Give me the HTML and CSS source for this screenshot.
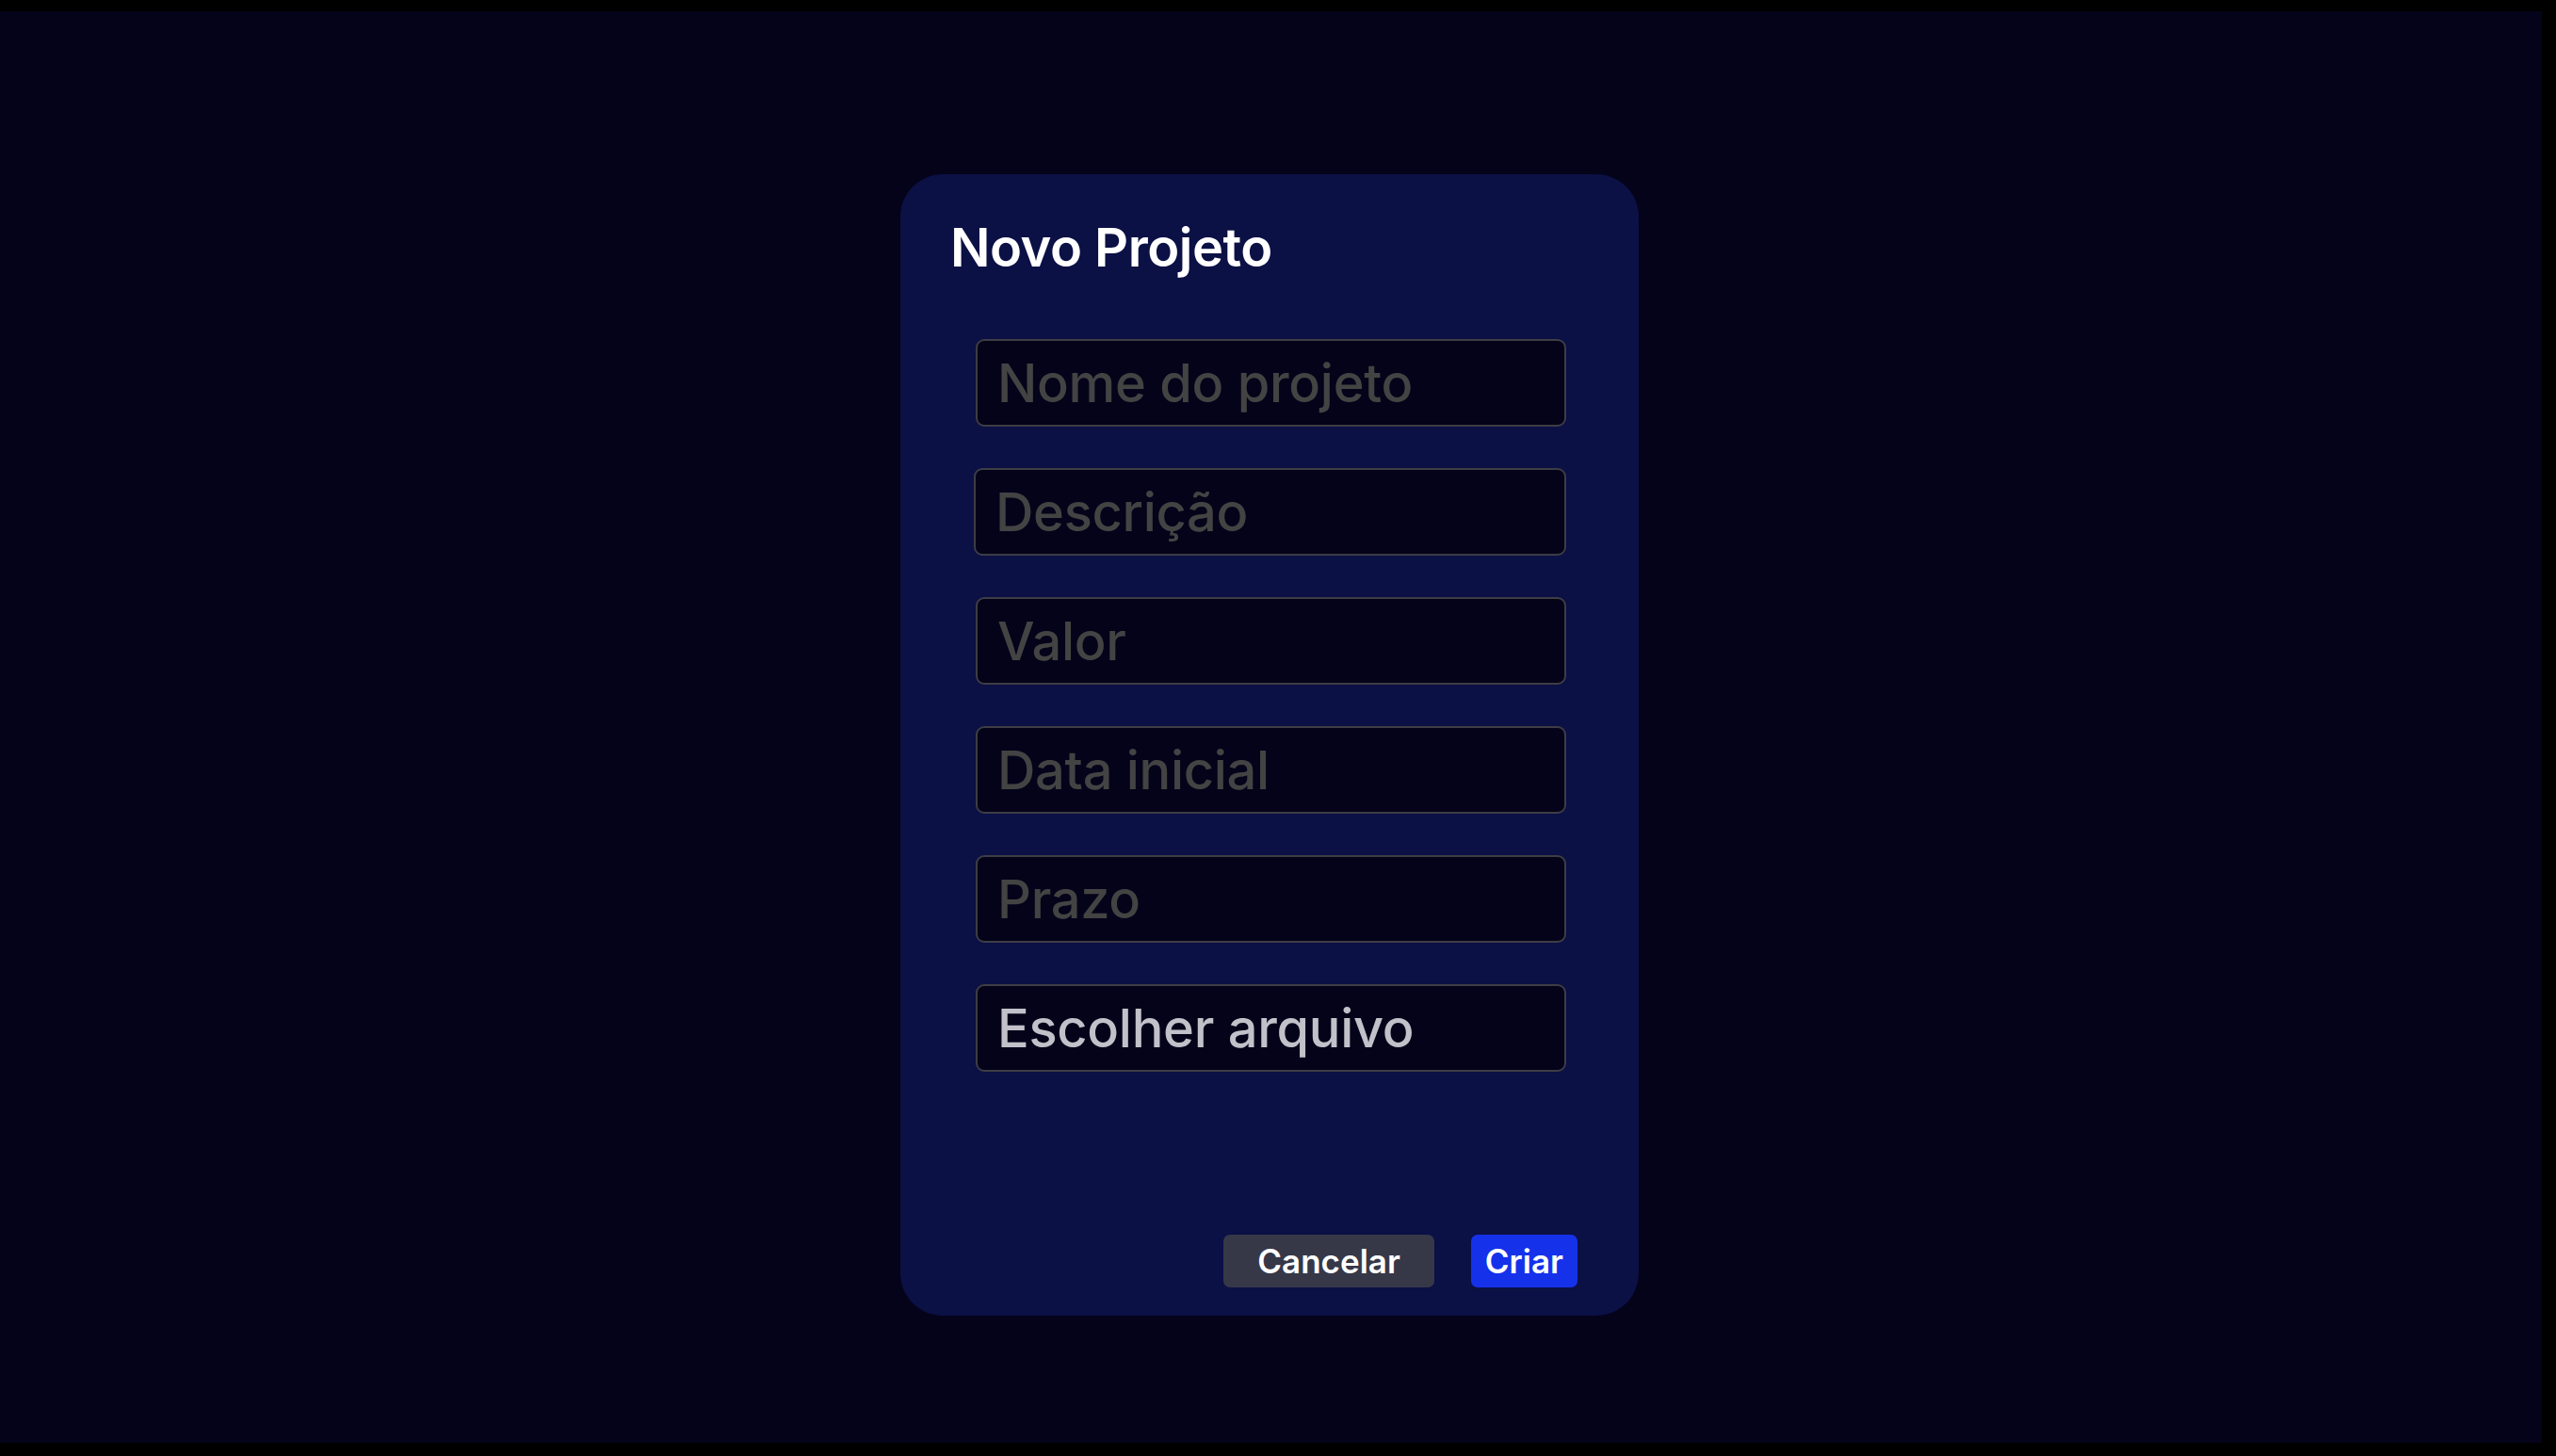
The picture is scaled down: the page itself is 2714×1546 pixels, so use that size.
FILE: index.html
```html
<!DOCTYPE html>
<html lang="pt-BR">
<head>
<meta charset="utf-8">
<title>Novo Projeto</title>
<link rel="stylesheet" href="styles.css">
</head>
<body>
<div class="screen">
  <div class="modal">
    <h1 class="title">Novo Projeto</h1>
    <form class="fields">
      <input class="field" type="text" placeholder="Nome do projeto">
      <input class="field field-wide" type="text" placeholder="Descrição">
      <input class="field" type="text" placeholder="Valor">
      <input class="field" type="text" placeholder="Data inicial">
      <input class="field" type="text" placeholder="Prazo">
      <label class="field file">Escolher arquivo</label>
    </form>
    <div class="actions">
      <button class="btn btn-cancel" type="button">Cancelar</button>
      <button class="btn btn-create" type="button">Criar</button>
    </div>
  </div>
</div>
</body>
</html>
```
FILE: styles.css
```css
html {
  background: #000;
}
body {
  margin: 0;
  font-family: Inter, "Liberation Sans", sans-serif;
}
.screen {
  margin-top: 12px;
  width: 2699px;
  height: 1520px;
  background: #05031a;
  display: flex;
  justify-content: flex-start;
  align-items: flex-start;
  padding: 173px 0 0 956px;
  box-sizing: border-box;
}
.modal {
  width: 784px;
  height: 1212px;
  box-sizing: border-box;
  background: #0b1045;
  border-radius: 45px;
  padding: 44px 0 30px 0;
  display: flex;
  flex-direction: column;
}
.title {
  margin: 0;
  padding-left: 53px;
  font-size: 56px;
  line-height: 68px;
  font-weight: 600;
  letter-spacing: -0.5px;
  color: #ffffff;
}
.fields {
  margin: 63px 0 0 0;
  padding-left: 80px;
  display: flex;
  flex-direction: column;
  gap: 44px;
}
.field {
  display: block;
  width: 627px;
  height: 93px;
  box-sizing: border-box;
  margin: 0;
  border: 2px solid #3d3d44;
  border-radius: 9px;
  background: #05031a;
  padding: 0 21px;
  font-family: Inter, "Liberation Sans", sans-serif;
  font-size: 56px;
  font-weight: 500;
  line-height: 68px;
  letter-spacing: -0.3px;
  color: #c2c1c9;
  outline: none;
}
.field::placeholder {
  color: #434343;
  opacity: 1;
}
.field-wide {
  margin-left: -2px;
  width: 629px;
}
.file {
  display: flex;
  align-items: center;
  color: #c2c1c9;
}
.actions {
  margin-top: auto;
  display: flex;
  justify-content: flex-end;
  gap: 39px;
  padding-right: 65px;
}
.btn {
  height: 56px;
  border: none;
  border-radius: 7px;
  font-family: Inter, "Liberation Sans", sans-serif;
  font-size: 35px;
  font-weight: 600;
  line-height: 56px;
  color: #ffffff;
  cursor: pointer;
}
.btn-cancel {
  background: #363848;
  padding: 0 36px;
}
.btn-create {
  background: #1532ea;
  padding: 0 15px;
}
```
